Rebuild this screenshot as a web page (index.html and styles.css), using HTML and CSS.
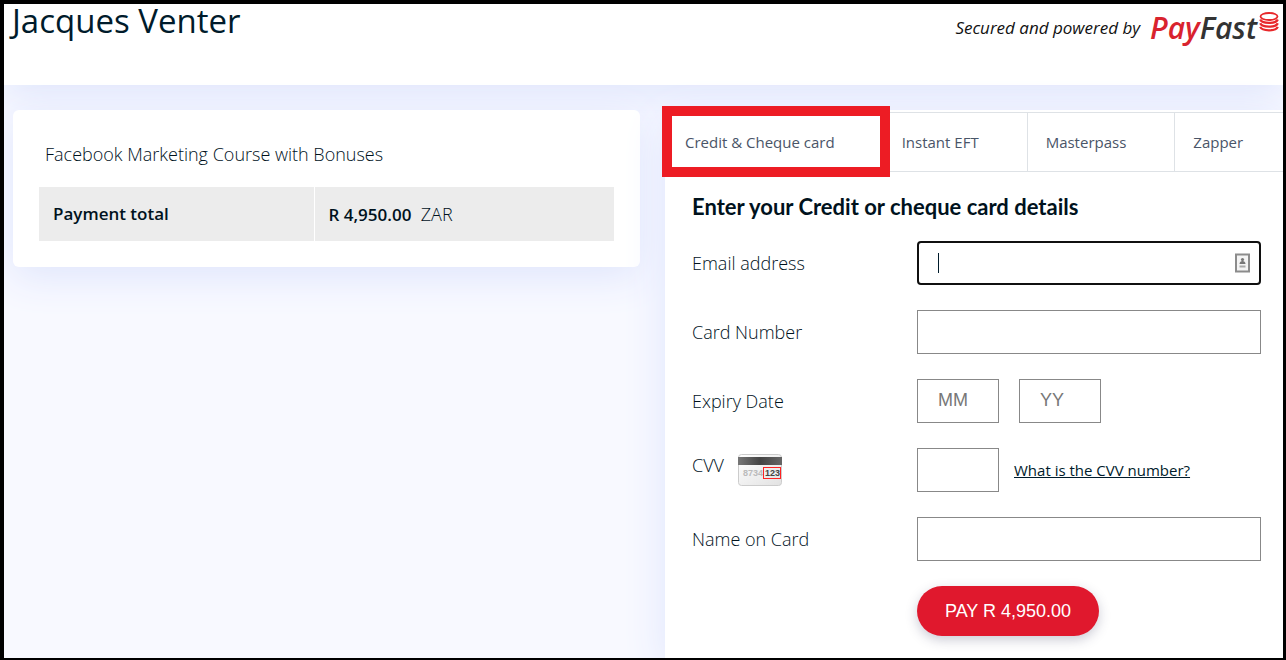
FILE: index.html
```html
<!DOCTYPE html>
<html lang="en">
<head>
    <meta charset="UTF-8">
    <meta name="viewport" content="width=device-width, initial-scale=1.0">
    <title>PayFast - Jacques Venter</title>
    <link rel="stylesheet" href="styles.css">
</head>
<body>
    <header class="header">
        <h1>Jacques Venter</h1>
        <div class="powered">
            <em>Secured and powered by</em>
            <a class="logo" href="#"><span class="logo-text"><span class="logo-pay">Pay</span>Fast</span><svg class="coins" width="20" height="20" viewBox="0 0 20 20" fill="none" stroke="#e8282b">
                    <ellipse cx="10" cy="4.5" rx="8.500" ry="3.500" stroke-width="1.8"/>
                    <path d="M1.200 7.500c2 4.500 15.600 4.500 17.600 0M1.200 11.200c2 4.500 15.600 4.500 17.600 0M1.200 14.900c2 4.500 15.600 4.500 17.600 0" stroke-width="2.300"/>
                </svg></a>
        </div>
    </header>

    <main class="main">
        <section class="card summary">
            <p>Facebook Marketing Course with Bonuses</p>
            <table>
                <tr>
                    <th scope="row">Payment total</th>
                    <td><b>R 4,950.00</b>&nbsp; ZAR</td>
                </tr>
            </table>
        </section>

        <section class="panel">
            <nav class="tabs">
                <button type="button" class="tab active">Credit &amp; Cheque card</button>
                <button type="button" class="tab">Instant EFT</button>
                <button type="button" class="tab">Masterpass</button>
                <button type="button" class="tab">Zapper</button>
            </nav>

            <form class="form">
                <h2>Enter your Credit or cheque card details</h2>
                <div class="row">
                    <label for="email">Email address</label>
                    <div class="email-field">
                        <input type="email" id="email" class="focused">
                        <span class="caret"></span>
                        <svg class="autofill" width="18" height="20" viewBox="0 0 18 20">
                            <rect x="2" y="1.500" width="13" height="17" fill="#f4f4f4" stroke="#8c8c8c" stroke-width="2"/>
                            <circle cx="8.500" cy="6.500" r="1.600" fill="#777"/>
                            <path d="M5.500 11c0-4 6-4 6 0z" fill="#777"/>
                            <path d="M5.500 13.500h6" stroke="#aaa" stroke-width="2"/>
                        </svg>
                    </div>
                </div>
                <div class="row">
                    <label for="card-number">Card Number</label>
                    <input type="text" id="card-number">
                </div>
                <div class="row">
                    <label for="month">Expiry Date</label>
                    <div class="fields">
                        <input type="text" id="month" class="short" placeholder="MM">
                        <input type="text" id="year" class="short" placeholder="YY" aria-label="Expiry year">
                    </div>
                </div>
                <div class="row">
                    <label for="cvv" class="cvv-label">CVV
                        <svg width="46" height="34" viewBox="0 0 46 34">
                            <defs>
                                <linearGradient id="face" x1="0" y1="0" x2="1" y2="1">
                                    <stop offset="0" stop-color="#fff"/>
                                    <stop offset="1" stop-color="#e2e2e2"/>
                                </linearGradient>
                                <linearGradient id="stripe" x1="0" y1="0" x2="1" y2="0">
                                    <stop offset="0" stop-color="#777"/>
                                    <stop offset="0.5" stop-color="#444"/>
                                    <stop offset="1" stop-color="#666"/>
                                </linearGradient>
                            </defs>
                            <rect x="1.500" y="1.500" width="43" height="31" rx="3" fill="url(#face)" stroke="#ccc"/>
                            <rect x="1" y="4" width="44" height="8" fill="url(#stripe)"/>
                            <text x="6" y="23" class="card-digits">8734</text>
                            <text x="28" y="23" class="card-code">123</text>
                            <rect x="26.500" y="14.500" width="17" height="11" fill="none" stroke="#f22"/>
                        </svg>
                    </label>
                    <div class="fields cvv-fields">
                        <input type="text" id="cvv" class="short">
                        <a href="#">What is the CVV number?</a>
                    </div>
                </div>
                <div class="row">
                    <label for="name">Name on Card</label>
                    <input type="text" id="name">
                </div>
                <button type="submit" class="pay">PAY R 4,950.00</button>
            </form>
        </section>
    </main>
</body>
</html>
```

FILE: styles.css
```css
* {
    box-sizing: border-box;
}

body {
    display: flex;
    flex-direction: column;
    height: 100vh;
    margin: 0;
    border: solid #000;
    border-width: 4px 3px 2px 4px;
    font-family: "Open Sans", "Noto Sans", sans-serif;
    font-size: 18px;
    font-weight: 300;
    line-height: 24px;
    color: #00121d;
    background-color: #f8f9ff;
    overflow: hidden;
}

.header {
    display: flex;
    justify-content: space-between;
    align-items: flex-start;
    height: 81px;
    flex-shrink: 0;
    padding: 0 4px 0 8px;
    background-color: #fff;
    box-shadow: 0 10px 40px #dfe5fc;
}

h1 {
    margin: 0;
    font-size: 33px;
    line-height: 34px;
    font-weight: 500;
    color: #001b2b;
}

.powered {
    display: flex;
    align-items: center;
    gap: 10px;
    height: 48px;
    font-size: 17px;
    font-weight: 400;
    color: #111;
}

.logo {
    display: flex;
    align-items: flex-start;
    gap: 2px;
    color: #333;
    text-decoration: none;
}

.logo-text {
    font-size: 30px;
    line-height: 40px;
    font-style: italic;
    font-weight: 600;
}

.logo-pay {
    color: #d9232e;
}

.coins {
    margin-top: 4px;
}

.main {
    display: grid;
    grid-template-columns: 627fr 618fr;
    gap: 25px;
    flex: 1;
    padding: 25px 0 0 9px;
}

.card {
    align-self: start;
    border-radius: 6px;
    background-color: #fff;
    box-shadow: 0 10px 40px #dfe5fc;
}

.summary {
    padding: 32px 26px 26px;
}

.summary p {
    margin: 0 0 21px 6px;
}

table {
    width: 100%;
    border-collapse: collapse;
    table-layout: fixed;
}

th, td {
    height: 54px;
    padding: 0 14px;
    background-color: #ececec;
    text-align: left;
    font-weight: 300;
}

th {
    width: 275px;
    border-right: 1px solid #fff;
    font-size: 17px;
    font-weight: 600;
}

b {
    font-size: 17px;
    font-weight: 600;
}

.panel {
    min-width: 0;
    padding-top: 2px;
    background-color: #fff;
    box-shadow: 0 10px 40px #dfe5fc;
}

.tabs {
    display: flex;
    height: 60px;
    border: solid #dee2e6;
    border-width: 1px 0;
}

.tab {
    position: relative;
    padding: 0 48px 0 18px;
    border: 0;
    border-right: 1px solid #dee2e6;
    background: none;
    font: inherit;
    font-size: 15px;
    font-weight: 400;
    color: #4a5568;
    text-align: left;
    white-space: nowrap;
    cursor: pointer;
}

.tab:last-child {
    flex: 1;
    min-width: 0;
    padding-right: 0;
    border-right: 0;
}

.tab.active {
    padding-left: 20px;
}

/* red frame round the selected tab */
.tab.active::after {
    content: "";
    position: absolute;
    inset: -7px -7px -6px -3px;
    border: 10px solid #ed1c24;
}

.form {
    display: flex;
    flex-direction: column;
    gap: 25px;
    padding: 21px 22px 0 27px;
}

h2 {
    margin: 0;
    font-family: Lato, sans-serif;
    font-size: 22px;
    font-weight: 700;
    line-height: 28px;
}

h2 + .row {
    margin-top: -5px;
}

.row {
    display: grid;
    grid-template-columns: 225px 1fr;
    align-items: center;
}

input {
    width: 100%;
    height: 44px;
    padding: 0 20px 2px;
    border: 1px solid #888;
    font-family: "Liberation Sans", Arial, sans-serif;
    font-size: 18px;
    color: #001b2b;
    background-color: #fff;
}

input::placeholder {
    color: #777;
}

.focused {
    display: block;
    border: 2px solid #101010;
    border-radius: 4px;
    outline: none;
}

.email-field {
    position: relative;
}

.caret {
    position: absolute;
    left: 21px;
    top: 12px;
    width: 1px;
    height: 20px;
    background-color: #001b2b;
}

.autofill {
    position: absolute;
    right: 9px;
    top: 12px;
}

.fields {
    display: flex;
    align-items: center;
    gap: 20px;
}

.short {
    width: 82px;
}

.cvv-label {
    display: flex;
    align-items: flex-start;
    gap: 13px;
}

.card-digits,
.card-code {
    font-family: "Liberation Sans", Arial, sans-serif;
    font-size: 9px;
    font-weight: bold;
    fill: #bbb;
}

.card-code {
    fill: #444;
}

.cvv-fields {
    gap: 15px;
}

.cvv-fields a {
    font-size: 15px;
    font-weight: 400;
    color: #001b2b;
}

.pay {
    align-self: flex-start;
    height: 50px;
    margin-left: 225px;
    padding: 0 28px;
    border: 0;
    border-radius: 25px;
    background-color: #e0182d;
    box-shadow: 0 4px 12px rgba(50, 50, 93, 0.25);
    font-family: "Liberation Sans", Arial, sans-serif;
    font-size: 18px;
    color: #fff;
    white-space: nowrap;
    cursor: pointer;
}
```
